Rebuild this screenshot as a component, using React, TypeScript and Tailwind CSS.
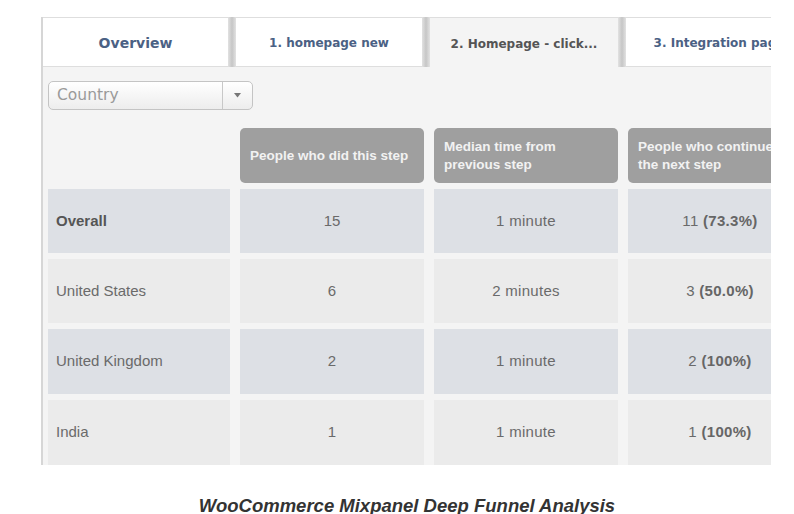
import React from "react";

const tabFont = { fontFamily: '"DejaVu Sans", Verdana, sans-serif' };
const bodyFont = { fontFamily: '"Liberation Sans", Arial, sans-serif' };

type Row = { label: string; a: string; b: string; n: string; p: string; blue: boolean; bold?: boolean; h: string };

const rows: Row[] = [
  { label: "Overall", a: "15", b: "1 minute", n: "11", p: "(73.3%)", blue: true, bold: true, h: "h-[64px]" },
  { label: "United States", a: "6", b: "2 minutes", n: "3", p: "(50.0%)", blue: false, h: "h-[64px]" },
  { label: "United Kingdom", a: "2", b: "1 minute", n: "2", p: "(100%)", blue: true, h: "h-[65px]" },
  { label: "India", a: "1", b: "1 minute", n: "1", p: "(100%)", blue: false, h: "h-[65px]" },
];

function Gap() {
  return <div className="w-[8px] shrink-0 bg-gradient-to-r from-[#e2e2e2] via-[#c6c6c6] to-[#e2e2e2]" />;
}

export default function App() {
  return (
    <div className="w-[794px] h-[514px] bg-white overflow-hidden flex flex-col">
      <div className="shrink-0 ml-[41px] mt-[17px] w-[730px] h-[448px] overflow-hidden border-l-2 border-[#d6d6d6] bg-[#f4f4f4] flex flex-col">
        {/* Tabs */}
        <div className="flex h-[50px] shrink-0 bg-[#ececec]" style={tabFont}>
          <div className="w-[185px] shrink-0 bg-white border-t border-b border-[#dedede] flex items-center justify-center pt-[2px] text-[14px] font-bold text-[#4b6184]">
            Overview
          </div>
          <Gap />
          <div className="w-[186px] shrink-0 bg-white border-t border-b border-[#dedede] flex items-center justify-center pt-[2px] text-[12px] font-bold text-[#4b6184]">
            1. homepage new
          </div>
          <Gap />
          <div className="w-[188px] shrink-0 bg-[#f4f4f4] border-t border-[#dedede] flex items-center justify-center pt-[2px] text-[12px] font-bold text-[#555555] whitespace-nowrap">
            2. Homepage - click...
          </div>
          <Gap />
          <div className="w-[186px] shrink-0 bg-white border-t border-b border-[#dedede] flex items-center justify-center pt-[2px] text-[12px] font-bold text-[#4b6184] whitespace-nowrap">
            3. Integration page
          </div>
        </div>

        {/* Content */}
        <div className="pl-[5px] pt-[14px] flex flex-col">
          <div className="w-[205px] h-[29px] rounded-[5px] border border-[#c4c4c4] bg-gradient-to-b from-white to-[#ededed] flex">
            <div className="flex-1 flex items-center pl-[8px] pt-[1px] text-[15.5px] text-[#9a9a9a]" style={tabFont}>
              Country
            </div>
            <div className="w-[30px] border-l border-[#c8c8c8] flex items-center justify-center">
              <svg width="7" height="5" viewBox="0 0 7 5">
                <polygon points="0,0 7,0 3.5,4.5" fill="#777" />
              </svg>
            </div>
          </div>

          <div className="mt-[18px] flex flex-col" style={bodyFont}>
            <div className="grid grid-cols-[182px_184px_184px_184px] gap-x-[10px] h-[55px]">
              <div />
              <div className="rounded-[5px] bg-[#9f9f9f] px-[10px] flex items-center text-[13.5px] leading-[18px] font-bold text-[#f2f2f2] whitespace-nowrap overflow-hidden">
                People who did this step
              </div>
              <div className="rounded-[5px] bg-[#9f9f9f] px-[10px] flex items-center text-[13.5px] leading-[18px] font-bold text-[#f2f2f2] whitespace-nowrap overflow-hidden">
                Median time from<br />previous step
              </div>
              <div className="rounded-[5px] bg-[#9f9f9f] px-[10px] flex items-center text-[13.5px] leading-[18px] font-bold text-[#f2f2f2] whitespace-nowrap overflow-hidden">
                People who continued to<br />the next step
              </div>
            </div>

            {rows.map((r) => {
              const bg = r.blue ? "bg-[#dde0e5]" : "bg-[#ebebeb]";
              return (
                <div key={r.label} className={`grid grid-cols-[182px_184px_184px_184px] gap-x-[10px] mt-[6px] shrink-0 ${r.h}`}>
                  <div className={`${bg} flex items-center pl-[8px] text-[15px] ${r.bold ? "font-bold text-[#555555]" : "text-[#6a6a6a]"}`}>
                    {r.label}
                  </div>
                  <div className={`${bg} flex items-center justify-center text-[15px] text-[#6a6a6a]`}>{r.a}</div>
                  <div className={`${bg} flex items-center justify-center text-[15px] tracking-[0.3px] text-[#6a6a6a]`}>{r.b}</div>
                  <div className={`${bg} flex items-center justify-center text-[15px] tracking-[0.3px] text-[#6a6a6a]`}>
                    <span>
                      {r.n} <span className="font-bold text-[#666666]">{r.p}</span>
                    </span>
                  </div>
                </div>
              );
            })}
          </div>
        </div>
      </div>

      <div
        className="shrink-0 mt-[31px] pl-[20px] text-center text-[18.5px] leading-[20px] font-bold italic text-[#333333] whitespace-nowrap"
        style={bodyFont}
      >
        WooCommerce Mixpanel Deep Funnel Analysis
      </div>
    </div>
  );
}
